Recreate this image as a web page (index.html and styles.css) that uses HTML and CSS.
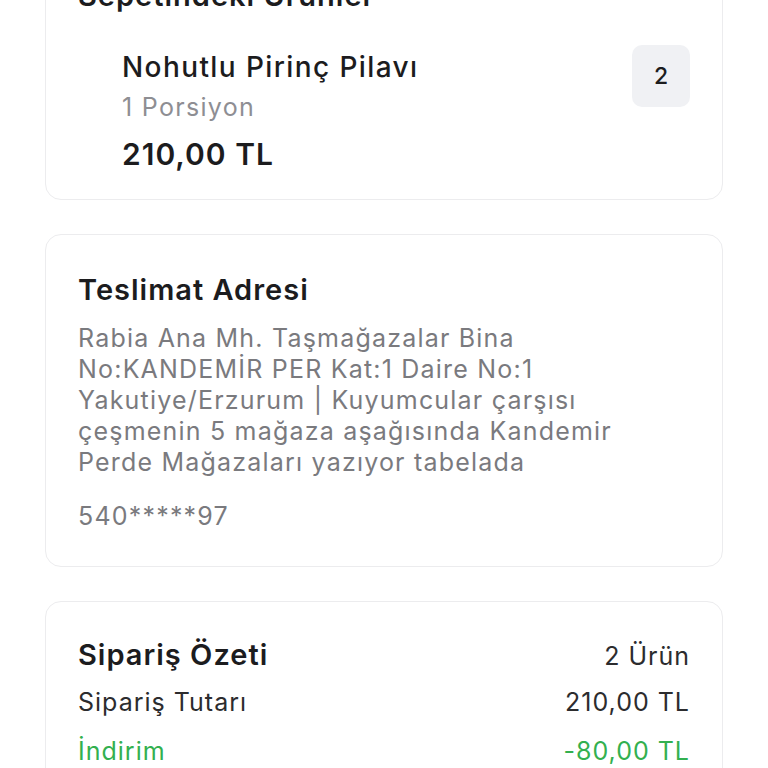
FILE: index.html
```html
<!DOCTYPE html>
<html lang="tr">
<head>
    <meta charset="UTF-8">
    <meta name="viewport" content="width=device-width, initial-scale=1.0">
    <title>Sepetim</title>
    <link rel="stylesheet" href="styles.css">
</head>
<body>
    <div class="page">
        <div class="card">
            <h2 class="card-title">Sepetindeki Ürünler</h2>
            <div class="item">
                <div class="item-info">
                    <div class="item-name">Nohutlu Pirinç Pilavı</div>
                    <div class="item-portion">1 Porsiyon</div>
                    <div class="item-price">210,00 TL</div>
                </div>
                <div class="qty">2</div>
            </div>
        </div>

        <div class="card address-card">
            <h2 class="card-title">Teslimat Adresi</h2>
            <p class="address">Rabia Ana Mh. Taşmağazalar Bina No:KANDEMİR PER Kat:1 Daire No:1 Yakutiye/Erzurum | Kuyumcular çarşısı çeşmenin 5 mağaza aşağısında Kandemir Perde Mağazaları yazıyor tabelada</p>
            <p class="phone">540*****97</p>
        </div>

        <div class="card summary">
            <div class="summary-head">
                <h2 class="card-title">Sipariş Özeti</h2>
                <span class="count">2 Ürün</span>
            </div>
            <div class="row">
                <span>Sipariş Tutarı</span>
                <span>210,00 TL</span>
            </div>
            <div class="row discount">
                <span>İndirim</span>
                <span>-80,00 TL</span>
            </div>
            <div class="row total">
                <span>Toplam</span>
                <span>130,00 TL</span>
            </div>
        </div>
    </div>
</body>
</html>
```

FILE: styles.css
```css
body {
    margin: 0;
    background-color: #fff;
    font-family: Inter, "Noto Sans", sans-serif;
    color: #1c1c1e;
}
.page {
    display: flex;
    flex-direction: column;
    gap: 34px;
    padding: 0 45px 40px;
    margin-top: -59px;
}
.card {
    border: 1.5px solid #ececee;
    border-radius: 16px;
    padding: 36px 32px 33px;
}
.card-title {
    margin: 0;
    font-size: 29px;
    font-weight: 600;
    line-height: 36px;
    letter-spacing: 1px;
}
.item {
    display: flex;
    justify-content: space-between;
    align-items: flex-start;
    padding-left: 44px;
    margin-top: 35px;
    margin-bottom: -6px;
}
.item-name {
    font-size: 28px;
    font-weight: 500;
    line-height: 36px;
    letter-spacing: 1.4px;
}
.item-portion {
    font-size: 25px;
    color: #8e8e93;
    line-height: 34px;
    letter-spacing: 1.3px;
    margin-top: 5px;
}
.item-price {
    font-size: 30px;
    font-weight: 600;
    line-height: 36px;
    letter-spacing: 1px;
    margin-top: 12px;
}
.qty {
    width: 58px;
    height: 62px;
    border-radius: 10px;
    background-color: #f0f1f4;
    display: flex;
    align-items: center;
    justify-content: center;
    font-size: 23px;
    font-weight: 500;
    margin-top: -4px;
}
.address-card {
    padding-top: 37px;
    padding-bottom: 34px;
}
.address {
    margin: 15px 0 0;
    font-size: 25px;
    line-height: 31px;
    letter-spacing: 1.2px;
    color: #7a7a7e;
    max-width: 560px;
}
.phone {
    margin: 23px 0 0;
    font-size: 25px;
    line-height: 31px;
    letter-spacing: 1.2px;
    color: #7a7a7e;
}
.summary {
    padding-top: 37px;
}
.summary-head {
    display: flex;
    justify-content: space-between;
    align-items: baseline;
}
.summary-head .card-title {
    line-height: 32px;
}
.count {
    font-size: 25px;
    letter-spacing: 1px;
    color: #2c2c2e;
}
.row {
    display: flex;
    justify-content: space-between;
    font-size: 25px;
    line-height: 35px;
    letter-spacing: 1px;
    color: #2c2c2e;
    margin-top: 14px;
}
.discount {
    color: #33b04f;
}
.total {
    font-weight: 600;
}
```
